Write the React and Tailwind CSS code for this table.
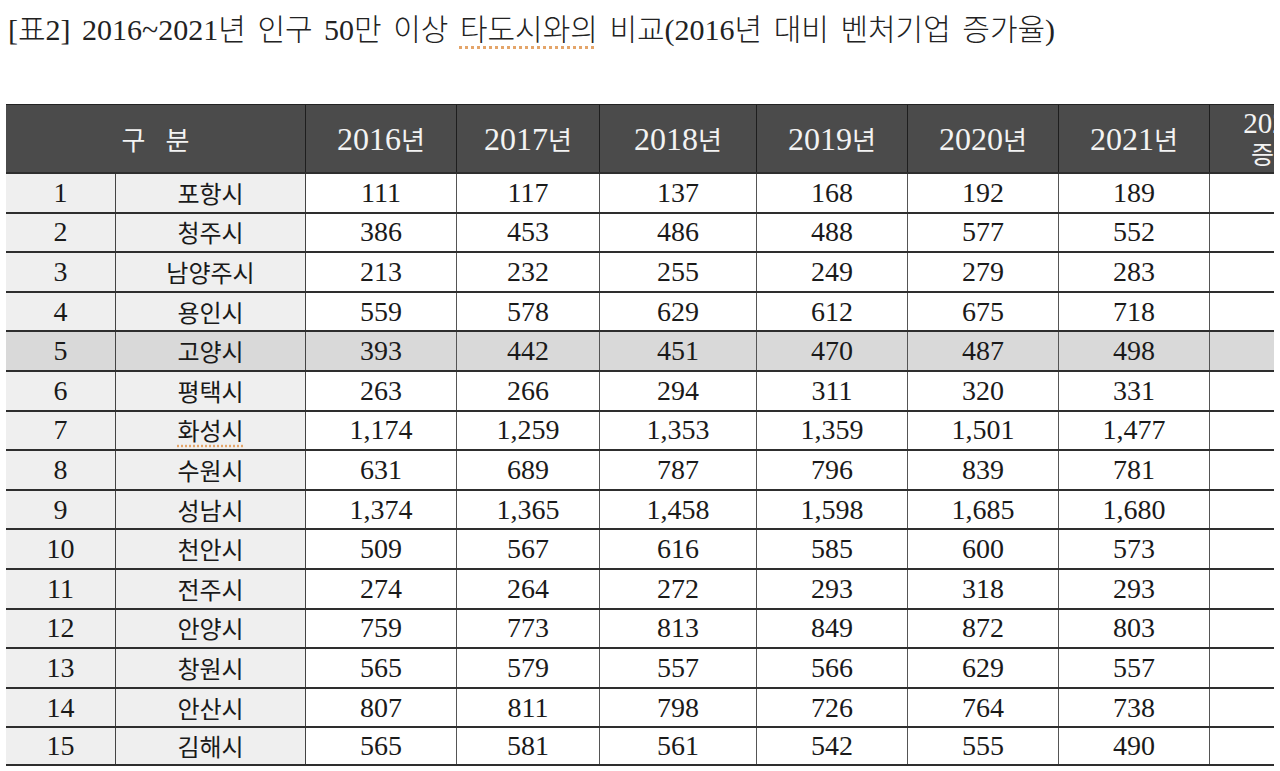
import React from "react";

const widths = [110, 190, 151, 143, 157, 151, 151, 151, 151];

const rows = [
  ["1", "포항시", "111", "117", "137", "168", "192", "189"],
  ["2", "청주시", "386", "453", "486", "488", "577", "552"],
  ["3", "남양주시", "213", "232", "255", "249", "279", "283"],
  ["4", "용인시", "559", "578", "629", "612", "675", "718"],
  ["5", "고양시", "393", "442", "451", "470", "487", "498"],
  ["6", "평택시", "263", "266", "294", "311", "320", "331"],
  ["7", "화성시", "1,174", "1,259", "1,353", "1,359", "1,501", "1,477"],
  ["8", "수원시", "631", "689", "787", "796", "839", "781"],
  ["9", "성남시", "1,374", "1,365", "1,458", "1,598", "1,685", "1,680"],
  ["10", "천안시", "509", "567", "616", "585", "600", "573"],
  ["11", "전주시", "274", "264", "272", "293", "318", "293"],
  ["12", "안양시", "759", "773", "813", "849", "872", "803"],
  ["13", "창원시", "565", "579", "557", "566", "629", "557"],
  ["14", "안산시", "807", "811", "798", "726", "764", "738"],
  ["15", "김해시", "565", "581", "561", "542", "555", "490"],
];

const years = ["2016", "2017", "2018", "2019", "2020", "2021"];
const serif = { fontFamily: '"Liberation Serif", "Noto Sans CJK KR", serif' };
const kr = { fontFamily: '"Noto Sans CJK KR", "Liberation Serif", sans-serif' };

export default function App() {
  return (
    <div className="w-[1280px] h-[771px] bg-white overflow-hidden text-[#1a1a1a]" style={serif}>
      <div className="h-[104px] pl-[8px] pt-[13px]">
        <div className="text-[30px] leading-[34px] whitespace-nowrap font-light text-[#222]" style={{ ...serif, wordSpacing: "4px" }}>
          [표2] 2016~2021년 인구 50만 이상{" "}
          <span className="underline decoration-dotted decoration-[#e4a56a] underline-offset-[6px]">타도시와의</span>{" "}
          비교(2016년 대비 벤처기업 증가율)
        </div>
      </div>
      <div className="ml-[6px] w-[1268px] overflow-hidden">
        <div className="w-[1355px] flex flex-col">
          <div className="h-[68px] flex bg-[#4b4b4b] border-t border-[#222] text-[#f3f3f3]">
            <div className="w-[300px] flex items-center justify-center gap-[20px] border-r border-[#1e1e1e] text-[26px]" style={kr}>
              <span>구</span>
              <span>분</span>
            </div>
            {years.map((y, i) => (
              <div
                key={y}
                style={{ width: widths[i + 2] }}
                className="flex items-center justify-center border-r border-[#1e1e1e] text-[32px]"
              >
                {y}
                <span className="text-[26px]" style={kr}>년</span>
              </div>
            ))}
            <div className="w-[151px] flex flex-col items-center justify-center leading-[30px] pb-[2px]">
              <span className="text-[29px]">2021년</span>
              <span className="text-[25px]" style={kr}>증가율</span>
            </div>
          </div>
          {rows.map((r, ri) => {
            const hl = ri === 4;
            return (
              <div
                key={ri}
                className={
                  "h-[39.6px] flex border-t-2 border-[#2e2e2e] text-[28px] leading-none " +
                  (ri === rows.length - 1 ? "border-b-2 " : "") +
                  (hl ? "bg-[#d9d9d9]" : "")
                }
              >
                <div
                  className={"w-[110px] flex items-center justify-center border-r border-[#444] " + (hl ? "" : "bg-[#efefef]")}
                >
                  {r[0]}
                </div>
                <div
                  className={"w-[190px] flex items-center justify-center border-r border-[#444] text-[24px] " + (hl ? "" : "bg-[#efefef]")}
                  style={kr}
                >
                  {r[1] === "화성시" ? (
                    <span className="underline decoration-dotted decoration-[#e4a56a] underline-offset-[5px]">{r[1]}</span>
                  ) : (
                    r[1]
                  )}
                </div>
                {r.slice(2).map((v, ci) => (
                  <div
                    key={ci}
                    style={{ width: widths[ci + 2] }}
                    className="flex items-center justify-center border-r border-[#555]"
                  >
                    {v}
                  </div>
                ))}
                <div className="w-[151px]" />
              </div>
            );
          })}
        </div>
      </div>
    </div>
  );
}
